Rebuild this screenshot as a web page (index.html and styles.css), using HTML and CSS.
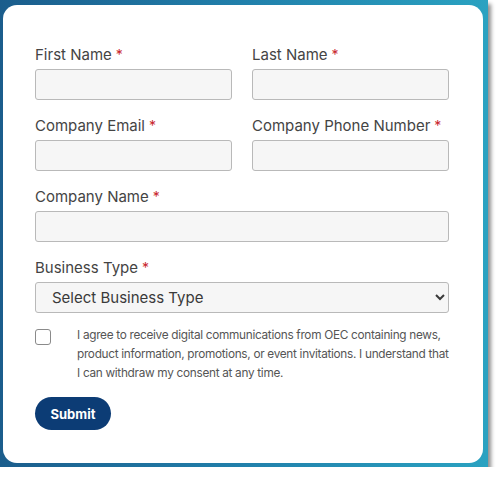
FILE: index.html
```html
<!DOCTYPE html>
<html lang="en">
<head>
  <meta charset="UTF-8" />
  <meta name="viewport" content="width=device-width, initial-scale=1.0"/>
  <title>Contact Form</title>
  <link rel="stylesheet" href="styles.css">
</head>
<body>
  <div class="frame">
    <div class="card">
      <form class="form" onsubmit="event.preventDefault();">
        <div class="row two">
          <div class="form-group">
            <label for="first">First Name<span class="req">*</span></label>
            <input type="text" id="first">
          </div>
          <div class="form-group">
            <label for="last">Last Name<span class="req">*</span></label>
            <input type="text" id="last">
          </div>
        </div>

        <div class="row two">
          <div class="form-group">
            <label for="email">Company Email<span class="req">*</span></label>
            <input type="email" id="email">
          </div>
          <div class="form-group">
            <label for="phone">Company Phone Number<span class="req">*</span></label>
            <input type="text" id="phone">
          </div>
        </div>

        <div class="form-group">
          <label for="company">Company Name<span class="req">*</span></label>
          <input type="text" id="company">
        </div>

        <div class="form-group">
          <label for="btype">Business Type<span class="req">*</span></label>
          <select id="btype">
            <option>Select Business Type</option>
          </select>
        </div>

        <div class="consent">
          <input type="checkbox" id="consent">
          <label for="consent">I agree to receive digital communications from OEC containing news, product information, promotions, or event invitations. I understand that I can withdraw my consent at any time.</label>
        </div>

        <button type="submit" class="btn">Submit</button>
      </form>
    </div>
  </div>
</body>
</html>
```

FILE: styles.css
```css
/* Estilos gerais */
body {
  margin: 0;
  background-color: #fff;
  font-family: Inter, "Noto Sans", Arial, sans-serif;
}

.frame {
  width: 488px;
  height: 467px;
  box-sizing: border-box;
  padding: 5px 5px 4px 3px;
  background: linear-gradient(90deg, #1b5d8c 0%, #2180ab 50%, #2aa2c1 100%);
  box-shadow: 3px 4px 4px rgba(0, 0, 0, 0.45);
}

.card {
  height: 100%;
  box-sizing: border-box;
  background-color: #fff;
  border-radius: 14px;
  padding: 40px 34px 0 32px;
}

/* Formulário */
.form {
  display: flex;
  flex-direction: column;
  gap: 16px;
}

.row.two {
  display: grid;
  grid-template-columns: 1fr 1fr;
  column-gap: 20px;
}

.form-group label {
  display: block;
  font-size: 15px;
  line-height: 20px;
  color: #444;
  margin-bottom: 4px;
}

.req {
  color: #c8262c;
  font-size: 14px;
  margin-left: 4px;
}

input[type="text"],
input[type="email"],
select {
  display: block;
  width: 100%;
  box-sizing: border-box;
  height: 31px;
  margin: 0;
  background-color: #f6f6f6;
  border: 1px solid #b9b9b9;
  border-radius: 3px;
  font-family: inherit;
}

select {
  font-size: 15px;
  color: #3a3a3a;
  padding: 0 12px;
}

/* Consentimento */
.consent {
  display: flex;
  align-items: flex-start;
  gap: 26px;
  margin-top: -1px;
}

.consent input {
  flex: none;
  width: 16px;
  height: 16px;
  margin: 1px 0 0 0;
  appearance: none;
  border: 1px solid #8a8a8a;
  border-radius: 3px;
  background: #fff;
}

.consent label {
  font-size: 11.8px;
  line-height: 19px;
  letter-spacing: -0.3px;
  color: #555;
  margin-top: -2px;
}

button.btn {
  align-self: flex-start;
  width: 76px;
  height: 33px;
  margin-top: -2px;
  background-color: #0c3c75;
  color: #fff;
  border: none;
  border-radius: 17px;
  font-family: inherit;
  font-size: 13px;
  font-weight: bold;
  cursor: pointer;
}
```
